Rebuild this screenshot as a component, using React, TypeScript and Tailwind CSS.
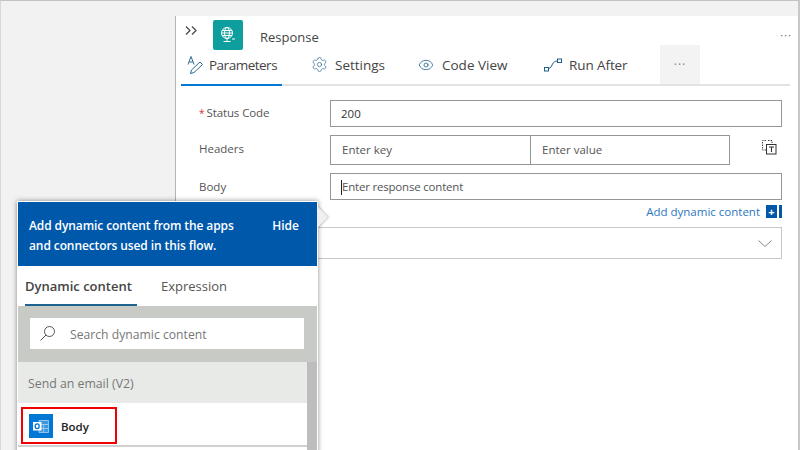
import { Settings, Eye } from 'lucide-react';

const inputCls = 'border border-[#969696] bg-white flex items-center text-[11.5px]';

function ParamsIcon() {
  return (
    <svg width="18" height="20" viewBox="0 0 18 20" fill="none" stroke="#2b6a94" strokeWidth="1">
      <path d="M1 9.5 L4 1.5 L7 9.5 M2.2 7 H5.8" />
      <path d="M3.5 18.5 L4.5 15 L13 7 L15.5 9.5 L7 17.5 Z" />
    </svg>
  );
}

function RunAfterIcon() {
  return (
    <svg width="18" height="14" viewBox="0 0 18 14" fill="none" stroke="#1f5f8b" strokeWidth="1">
      <rect x="0.5" y="9.5" width="4" height="3.5" />
      <rect x="13.5" y="1" width="4" height="3.5" />
      <path d="M4.5 10.5 C7 10 7 9 8.5 6 C9.5 4 11 3 13.5 3" />
    </svg>
  );
}

function GlobeIcon() {
  return (
    <svg width="18" height="18" viewBox="0 0 18 18" fill="none" stroke="#fff" strokeWidth="1">
      <circle cx="8" cy="7" r="5.5" />
      <ellipse cx="8" cy="7" rx="2.4" ry="5.5" />
      <path d="M2.5 7 H13.5 M3.2 4.5 H12.8 M3.2 9.5 H12.8" />
      <path d="M8 12.5 V15 M4.5 15.5 H11.5" />
      <path d="M13 13 H16" />
    </svg>
  );
}

function OutlookIcon() {
  return (
    <svg width="24" height="24" viewBox="0 0 24 24">
      <rect width="24" height="24" fill="#0078d4" />
      <path d="M10 6.5 H19.5 V18.5 H10 Z" fill="#3d97dc" stroke="#a9d3f2" strokeWidth="0.8" />
      <path d="M10 10.5 H19.5 M10 14.5 H19.5 M14.7 10.5 V18.5" stroke="#a9d3f2" strokeWidth="0.8" />
      <rect x="4" y="8" width="8.5" height="8.5" fill="#fff" />
      <ellipse cx="8.2" cy="12.2" rx="2" ry="2.4" fill="none" stroke="#0078d4" strokeWidth="1.3" />
    </svg>
  );
}

function HeaderTextIcon() {
  return (
    <svg width="16" height="16" viewBox="0 0 16 16" fill="none">
      <path d="M5 1.5 H1.5 V11 H5 M7 1.5 H11 V5" stroke="#444" strokeWidth="1" strokeDasharray="1.5 1" />
      <rect x="5.5" y="5.5" width="9.5" height="9.5" stroke="#333" strokeWidth="1" fill="#fff" />
      <path d="M8 8 H13 M10.5 8 V13" stroke="#333" strokeWidth="1.1" />
    </svg>
  );
}

function Tab({ icon, label, className, textClass }: { icon: React.ReactNode; label: string; className: string; textClass?: string }) {
  return (
    <div className={`flex items-center h-full ${className}`}>
      <span className="flex justify-center items-center">{icon}</span>
      <span className={`text-[13.5px] text-[#444] pt-[2px] ${textClass ?? ''}`}>{label}</span>
    </div>
  );
}

export default function App() {
  return (
    <div
      className="relative w-[800px] h-[450px] overflow-hidden bg-[#f2f2f2] border-t border-t-[#c4c4c4] border-r-2 border-r-[#c8c8c8] border-l border-l-[#d6d6d6] pt-[15px] pl-[174px]"
      style={{ fontFamily: '"Open Sans", sans-serif' }}
    >
      {/* Response card */}
      <div className="h-full bg-white border-l border-l-[#b4b4b4]">
        <div className="flex items-start h-[29px] pl-[9px] pr-[6px]">
          <span className="mt-[10px] w-[28px]">
            <svg width="13" height="9" viewBox="0 0 13 9" fill="none" stroke="#444" strokeWidth="1.2">
              <path d="M1 0.5 L5 4.5 L1 8.5 M7 0.5 L11 4.5 L7 8.5" />
            </svg>
          </span>
          <div className="w-[30px] h-[30px] mt-[4px] bg-[#0f9e9e] rounded-[2px] flex items-center justify-center">
            <GlobeIcon />
          </div>
          <span className="ml-[17px] mt-[11px] text-[13px] leading-[20px] text-[#444]">Response</span>
          <span className="ml-auto mt-[11px] text-[11px] leading-[16px] tracking-[1px] text-[#666]">···</span>
        </div>

        {/* Tabs */}
        <div className="flex items-stretch h-[41px] ml-[5px] mr-[8px] border-b-2 border-b-[#e3e3e3]">
          <div className="relative">
            <Tab icon={<ParamsIcon />} label="Parameters" className="w-[101px] pl-[6px] gap-[4px]" textClass="tracking-[-0.5px]" />
            <div className="absolute left-0 right-0 bottom-[-2px] h-[2px] bg-[#0078d4]" />
          </div>
          <Tab
            icon={<Settings size={17} strokeWidth={1} color="#2b6a94" />}
            label="Settings"
            className="ml-[29px] gap-[7px] w-[107px]"
          />
          <Tab
            icon={<Eye size={16} strokeWidth={1.2} color="#1f5f8b" />}
            label="Code View"
            className="gap-[8px] w-[126px]"
          />
          <Tab icon={<RunAfterIcon />} label="Run After" className="gap-[7px] w-[116px]" textClass="tracking-[-0.1px]" />
          <div className="w-[40px] bg-[#f3f3f3] flex items-center justify-center text-[12px] tracking-[1px] text-[#888]">
            ···
          </div>
        </div>

        {/* Form */}
        <div className="pl-[23px] text-[11.5px] text-[#555]">
          <div className="flex items-start mt-[14px] h-[27px]">
            <span className="w-[131px] leading-[26px] tracking-[-0.1px]">
              <span className="text-[#d13438] text-[10px] mr-[2px]">*</span>Status Code
            </span>
            <div className={`${inputCls} w-[452px] h-[27px] pl-[10px] pt-[1px] text-[#333]`}>200</div>
          </div>
          <div className="flex items-start mt-[8px] h-[30px]">
            <span className="w-[131px] leading-[27px]">Headers</span>
            <div className={`${inputCls} w-[201px] h-[30px] pl-[11px]`}>Enter key</div>
            <div className={`${inputCls} w-[200px] h-[30px] pl-[11px] -ml-px`}>Enter value</div>
            <span className="ml-[31px] mt-[4px]">
              <HeaderTextIcon />
            </span>
          </div>
          <div className="flex items-start mt-[8px] h-[27px]">
            <span className="w-[131px] leading-[27px]">Body</span>
            <div className={`${inputCls} w-[452px] h-[27px] pl-[10px] pt-[1px] tracking-[-0.2px]`}>
              <span className="w-px h-[15px] bg-[#222]" />
              Enter response content
            </div>
          </div>
          <div className="flex items-center justify-end w-[583px] h-[21px] mt-[1px]">
            <span className="text-[11.5px] text-[#2b78c2]">Add dynamic content</span>
            <span className="ml-[6px] w-[11px] h-[13px] bg-[#0058ab] text-white text-[11px] leading-[11px] font-bold flex items-center justify-center">
              +
            </span>
            <span className="ml-[2px] w-[3px] h-[13px] bg-[#0058ab]" />
          </div>
          <div className="w-[583px] h-[32px] mt-[5px] border border-[#c8c8c8] flex items-center justify-end pr-[9px]">
            <svg width="14" height="7" viewBox="0 0 14 7" fill="none" stroke="#888" strokeWidth="1">
              <path d="M0.5 0.5 L7 6.5 L13.5 0.5" />
            </svg>
          </div>
        </div>
      </div>

      {/* Dynamic content flyout */}
      <div className="absolute left-[16px] top-[200px] w-[301px] h-[260px] bg-white border border-white shadow-[0_0_5px_rgba(0,0,0,0.45)] flex flex-col">
        <div className="absolute right-[-8px] top-[8px] w-[14px] h-[14px] rotate-45 bg-[#f0f0f0] shadow-[1px_-1px_2px_rgba(0,0,0,0.2)]" />
        <div className="relative h-[64px] bg-[#0058ab] text-white text-[12px] font-semibold leading-[20px] pl-[11px] pr-[18px] pt-[14px] flex justify-between">
          <span className="tracking-[-0.1px]">
            Add dynamic content from the apps
            <br />
            and connectors used in this flow.
          </span>
          <span>Hide</span>
        </div>
        <div className="relative flex h-[40px] bg-white text-[13px] pl-[7px]">
          <div className="w-[112px] h-full border-b-2 border-b-[#1f6391] font-semibold text-[#444] leading-[41px]">
            Dynamic content
          </div>
          <div className="ml-[24px] text-[#555] leading-[41px]">Expression</div>
        </div>
        <div className="relative h-[56px] bg-[#c8cac6] pt-[12px] pl-[12px]">
          <div className="w-[274px] h-[31px] bg-white flex items-center pl-[10px] gap-[15px] text-[12.2px] text-[#777]">
            <svg width="15" height="15" viewBox="0 0 15 15" fill="none" stroke="#555" strokeWidth="1">
              <circle cx="9.5" cy="5.5" r="5" />
              <path d="M6 9 L0.5 14.5" />
            </svg>
            <span className="pt-[3px]">Search dynamic content</span>
          </div>
        </div>
        <div className="relative flex-1 flex">
          <div className="w-[289px]">
            <div className="h-[41px] bg-[#e8eae7] flex items-center pl-[10px] pt-[3px] text-[12.3px] text-[#777]">
              Send an email (V2)
            </div>
            <div className="h-[44px] bg-white pl-[3px] pt-[4px] border-b-2 border-b-[#d0d0d0]">
              <div className="w-[96px] h-[37px] border-2 border-[#f00000] flex items-center pl-[6px] gap-[8px]">
                <OutlookIcon />
                <span className="text-[11.5px] font-semibold text-[#222] pt-[2px]">Body</span>
              </div>
            </div>
          </div>
          <div className="flex-1 bg-[#bdbdbd]" />
        </div>
      </div>
    </div>
  );
}
